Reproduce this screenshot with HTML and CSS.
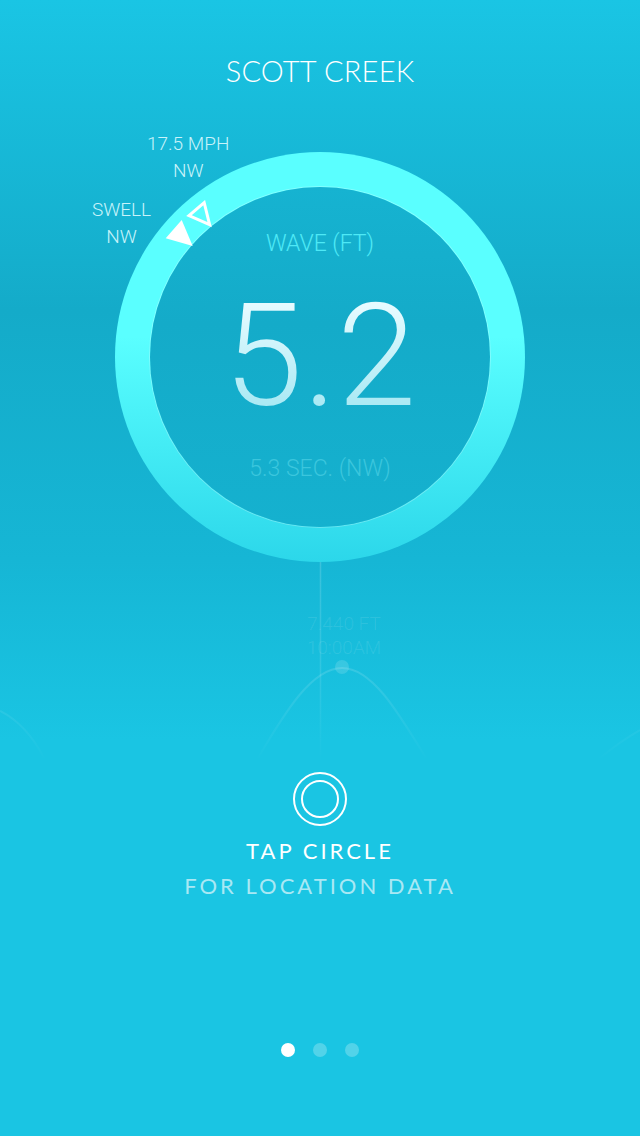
FILE: index.html
```html
<!DOCTYPE html>
<html lang="en">
<head>
  <meta charset="UTF-8" />
  <meta name="viewport" content="width=device-width, initial-scale=1.0"/>
  <title>Scott Creek</title>
  <link rel="stylesheet" href="styles.css">
</head>
<body>
  <div class="screen">
    <h1 class="title">SCOTT CREEK</h1>

    <div class="gauge">
      <div class="ring">
        <div class="dial">
          <div class="dial-label">WAVE (FT)</div>
          <div class="dial-value">5.2</div>
          <div class="dial-period">5.3 SEC. (NW)</div>
        </div>
      </div>
      <div class="marker marker-wind">17.5 MPH<br>NW</div>
      <div class="marker marker-swell">SWELL<br>NW</div>
      <svg class="arrows" width="410" height="410" viewBox="0 0 410 410">
        <polygon class="arrow-swell" points="66.7,68 50.7,86.3 77.7,94"/>
        <polygon class="arrow-wind" points="89.2,50.7 74,63.6 94.6,72.7"/>
      </svg>
    </div>

    <div class="tide">
      <svg class="tide-chart" width="640" height="210" viewBox="0 0 640 210">
        <defs>
          <linearGradient id="fade" gradientUnits="userSpaceOnUse" x1="0" y1="0" x2="0" y2="200">
            <stop offset="0" stop-color="#fff" stop-opacity="0.16"/>
            <stop offset="0.6" stop-color="#fff" stop-opacity="0.1"/>
            <stop offset="1" stop-color="#fff" stop-opacity="0"/>
          </linearGradient>
          <linearGradient id="fadeWave" gradientUnits="userSpaceOnUse" x1="0" y1="100" x2="0" y2="200">
            <stop offset="0" stop-color="#fff" stop-opacity="0.14"/>
            <stop offset="1" stop-color="#fff" stop-opacity="0"/>
          </linearGradient>
        </defs>
        <line class="tide-line" x1="320.5" y1="0" x2="320.5" y2="200"/>
        <path class="tide-wave" d="M258 196 C 285 150, 312 106, 342 106 C 372 106, 398 150, 426 196"/>
        <path class="tide-wave" d="M0 149 C 16 157, 32 173, 44 196"/>
        <path class="tide-wave" d="M640 168 C 626 176, 612 186, 600 196"/>
        <circle class="tide-dot" cx="342" cy="105" r="7"/>
      </svg>
      <div class="tide-text">7.440 FT<br>10:00AM</div>
    </div>

    <div class="hint">
      <div class="hint-icon"><div class="hint-icon-inner"></div></div>
      <div class="hint-main">TAP CIRCLE</div>
      <div class="hint-sub">FOR LOCATION DATA</div>
    </div>

    <div class="pager">
      <span class="pager-dot active"></span>
      <span class="pager-dot"></span>
      <span class="pager-dot"></span>
    </div>
  </div>
</body>
</html>
```

FILE: styles.css
```css
* { box-sizing: border-box; }
html, body { margin: 0; padding: 0; }
body { width: 640px; height: 1136px; overflow: hidden; font-family: Roboto, "Liberation Sans", sans-serif; font-weight: 300; }

.screen {
  display: flex; flex-direction: column; align-items: center;
  width: 640px; height: 1136px; padding-top: 53px; color: #fff;
  background: linear-gradient(to bottom, #1ac5e4 0, #14abc9 310px, #16b6d5 560px, #1ac5e3 740px, #1ac5e3 100%);
}

.title { margin: 0; height: 36px; font-size: 29px; line-height: 36px; font-weight: 300; font-family: Lato, sans-serif; letter-spacing: 0.2px; }

.gauge { position: relative; width: 410px; height: 410px; margin-top: 63px; flex: none; }
.ring {
  display: flex; align-items: center; justify-content: center;
  width: 410px; height: 410px; border-radius: 50%;
  background: linear-gradient(to bottom, #5affff 0, #5affff 45%, #2cd7ea 100%);
}
.dial {
  display: flex; flex-direction: column; align-items: center;
  width: 340px; height: 340px; border-radius: 50%; padding-top: 41px;
  background: linear-gradient(to bottom, #16b3d1 0, #14abc9 40%, #15b1cf 100%);
  box-shadow: 0 0 0 1px rgba(255,255,255,0.25);
}
.dial-label { font-size: 23px; line-height: 32px; color: #4ee9f6; }
.dial-value {
  margin-top: 11px; font-size: 143px; line-height: 170px; font-weight: 300;
  background: linear-gradient(to bottom, #e6fbff 20%, #a9e9f4 80%);
  -webkit-background-clip: text; background-clip: text; color: transparent;
}
.dial-period { margin-top: 12px; font-size: 23px; line-height: 32px; color: #3bc6dd; }

.marker { position: absolute; text-align: center; font-size: 19px; line-height: 27px; color: #c8f3fa; white-space: nowrap; }
.marker-wind { left: 32px; top: -22px; }
.marker-swell { left: -23px; top: 44px; }
.arrows { position: absolute; left: 0; top: 0; }
.arrow-swell { fill: #fff; }
.arrow-wind { fill: none; stroke: #fff; stroke-width: 3; }

.tide { position: relative; width: 640px; height: 210px; flex: none; }
.tide-chart { position: absolute; left: 0; top: 0; }
.tide-line { stroke: url(#fade); stroke-width: 1.5; }
.tide-wave { fill: none; stroke: url(#fadeWave); stroke-width: 2; }
.tide-dot { fill: rgba(255,255,255,0.14); }
.tide-text { position: absolute; left: 264px; top: 50px; width: 160px; text-align: center; font-size: 19px; line-height: 24px; color: rgba(255,255,255,0.1); }

.hint { display: flex; flex-direction: column; align-items: center; flex: none; }
.hint-icon { display: flex; align-items: center; justify-content: center; width: 54px; height: 54px; border: 2px solid #fff; border-radius: 50%; }
.hint-icon-inner { width: 38px; height: 38px; border: 2px solid #fff; border-radius: 50%; }
.hint-main { margin-top: 11px; font-family: Lato, sans-serif; font-weight: 400; font-size: 22px; line-height: 28px; letter-spacing: 3px; }
.hint-sub { margin-top: 7px; font-family: Lato, sans-serif; font-weight: 400; font-size: 22px; line-height: 28px; letter-spacing: 3px; color: #a9e8f4; }

.pager { display: flex; gap: 18px; margin-top: 143px; }
.pager-dot { width: 14px; height: 14px; border-radius: 50%; background: #52d3e9; }
.pager-dot.active { background: #fff; }
```
